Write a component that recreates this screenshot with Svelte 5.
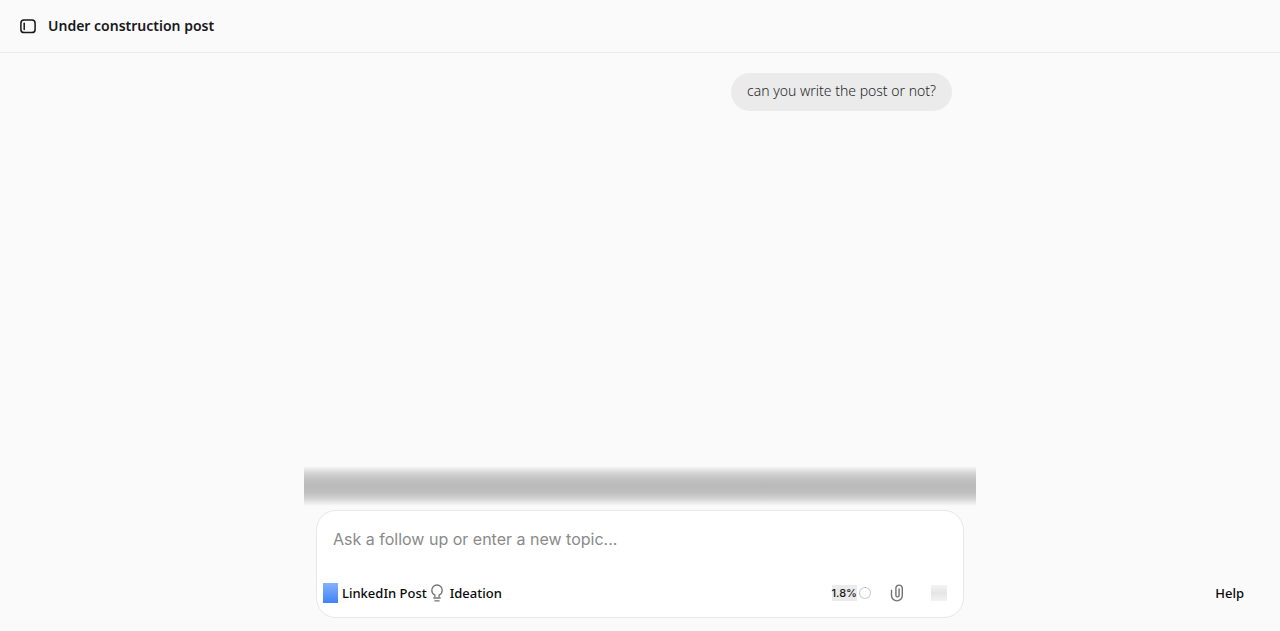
<script>
  let message = $state("");

  const title = "Under construction post";
  const usage = "1.8%";
  const messages = [{ id: 1, text: "can you write the post or not?" }];
</script>

<div class="app">
  <header class="topbar">
    <button class="icon-btn" type="button" aria-label="Toggle sidebar">
      <svg width="16" height="16" viewBox="0 0 16 16" fill="none" stroke="currentColor" stroke-width="1.5" stroke-linecap="round">
        <rect x="0.9" y="2" width="14.2" height="12.6" rx="3.2" />
        <path d="M4.2 5.2v6.2" />
      </svg>
    </button>
    <h1>{title}</h1>
  </header>

  <main class="thread">
    {#each messages as item (item.id)}
      <p class="bubble">{item.text}</p>
    {/each}
  </main>

  <footer class="dock">
    <div class="dock-main">
      <div class="fade"></div>
      <form class="composer" onsubmit={(e) => e.preventDefault()}>
        <input class="prompt" type="text" aria-label="Message" placeholder="Ask a follow up or enter a new topic..." bind:value={message} />
        <div class="tools">
          <button class="tool" type="button">
            <span class="swatch"></span>
            LinkedIn Post
          </button>
          <button class="tool idea" type="button">
            <svg width="12" height="18" viewBox="0 0 12 18" fill="none" stroke="currentColor" stroke-width="1.3" stroke-linecap="round">
              <path d="M3.9 12.6v-1.4C2 10.2.8 8.4.8 6.2a5.2 5.2 0 0 1 10.4 0c0 2.2-1.2 4-3.1 5v1.4" />
              <path d="M2.8 14h6.4M3.9 16.8h4.2" />
            </svg>
            Ideation
          </button>
          <span class="usage">
            <span class="percent">{usage}</span>
            <svg width="14" height="14" viewBox="0 0 14 14" fill="none">
              <circle cx="7" cy="7" r="5.5" stroke="#d0d0d2" stroke-width="1.2" />
              <path d="M7 1.5a5.5 5.5 0 0 1 .8.06" stroke="#777" />
            </svg>
          </span>
          <button class="icon-btn clip" type="button" aria-label="Attach file">
            <svg width="14" height="18" viewBox="0 0 14 18" fill="none" stroke="currentColor" stroke-width="1.4" stroke-linecap="round">
              <path d="M1.5 6.5v5a5.4 5.4 0 0 0 10.8 0V4.3a3.2 3.2 0 0 0-6.4 0v7a1.600 1.600 0 0 0 3.200 0V5" />
            </svg>
          </button>
          <button class="send" type="submit" aria-label="Send"></button>
        </div>
      </form>
    </div>
    <button class="help" type="button">Help</button>
  </footer>
</div>

<style>
  :global(body) {
    background: #fafafa;
  }
  .app {
    min-height: 100vh;
    display: flex;
    flex-direction: column;
    font-family: "Noto Sans", sans-serif;
    color: #18181b;
  }
  button {
    border: 0;
    padding: 0;
    background: none;
    font: inherit;
    color: inherit;
    cursor: pointer;
  }
  svg {
    display: block;
    flex: none;
  }

  .topbar {
    display: flex;
    align-items: center;
    gap: 12px;
    height: 52px;
    padding: 0 20px;
    border-bottom: 1px solid #ebebec;
  }
  h1 {
    margin: 0;
    font-size: 14px;
    line-height: 20px;
    font-weight: 600;
  }

  .thread {
    flex: 1;
    width: 100%;
    max-width: 672px;
    box-sizing: border-box;
    margin: 0 auto;
    padding: 20px 24px;
    display: flex;
    flex-direction: column;
    align-items: flex-end;
  }
  .bubble {
    margin: 0;
    padding: 7px 16px 9px;
    border-radius: 20px;
    background: #ebebec;
    color: #27272a;
    font-size: 14px;
    line-height: 22px;
    font-weight: 350;
  }

  .dock {
    display: grid;
    grid-template-columns: 1fr minmax(0, 672px) 1fr;
    align-items: end;
    padding-bottom: 13px;
  }
  .dock-main {
    grid-column: 2;
  }
  .fade {
    height: 40px;
    margin-bottom: 4px;
    background: linear-gradient(#fafafa, #d4d4d4 18%, #c3c3c3 32%, #b9b9b9 50%, #c1c1c1 68%, #d4d4d4 82%, #fafafa);
  }
  .composer {
    margin: 0 12px;
    border: 1px solid #e8e8e9;
    border-radius: 20px;
    background: #fff;
    padding: 16px 16px 12px 6px;
  }
  .prompt {
    display: block;
    width: 100%;
    box-sizing: border-box;
    border: 0;
    outline: 0;
    padding: 0 10px;
    background: none;
    font: 16px/24px Inter, sans-serif;
    color: inherit;
  }
  .prompt::placeholder {
    color: #8a8a8a;
    opacity: 1;
  }
  .tools {
    display: flex;
    align-items: center;
    margin-top: 30px;
    height: 24px;
  }
  .tool {
    display: flex;
    align-items: center;
    gap: 4px;
    color: #09090b;
    font-size: 13px;
    line-height: 20px;
    font-weight: 500;
  }
  .idea {
    gap: 7px;
    margin-left: 4px;
  }
  .idea svg,
  .clip {
    color: #71717a;
  }
  .swatch {
    width: 15px;
    height: 20px;
    background: linear-gradient(#86b0fb, #3f83f7);
  }
  .usage {
    display: flex;
    align-items: center;
    gap: 1px;
    margin-left: auto;
    font: 500 11px/16px Inter, sans-serif;
  }
  .percent {
    background: #ebebec;
  }
  .clip {
    margin-left: 18px;
  }
  .send {
    width: 16px;
    height: 16px;
    margin-left: 27px;
    background: linear-gradient(#f3f3f3, #e5e5e5 50%, #f3f3f3);
  }
  .help {
    grid-column: 3;
    justify-self: end;
    margin: 0 36px 15px 0;
    color: #09090b;
    font-size: 13px;
    line-height: 20px;
    font-weight: 500;
  }
</style>
